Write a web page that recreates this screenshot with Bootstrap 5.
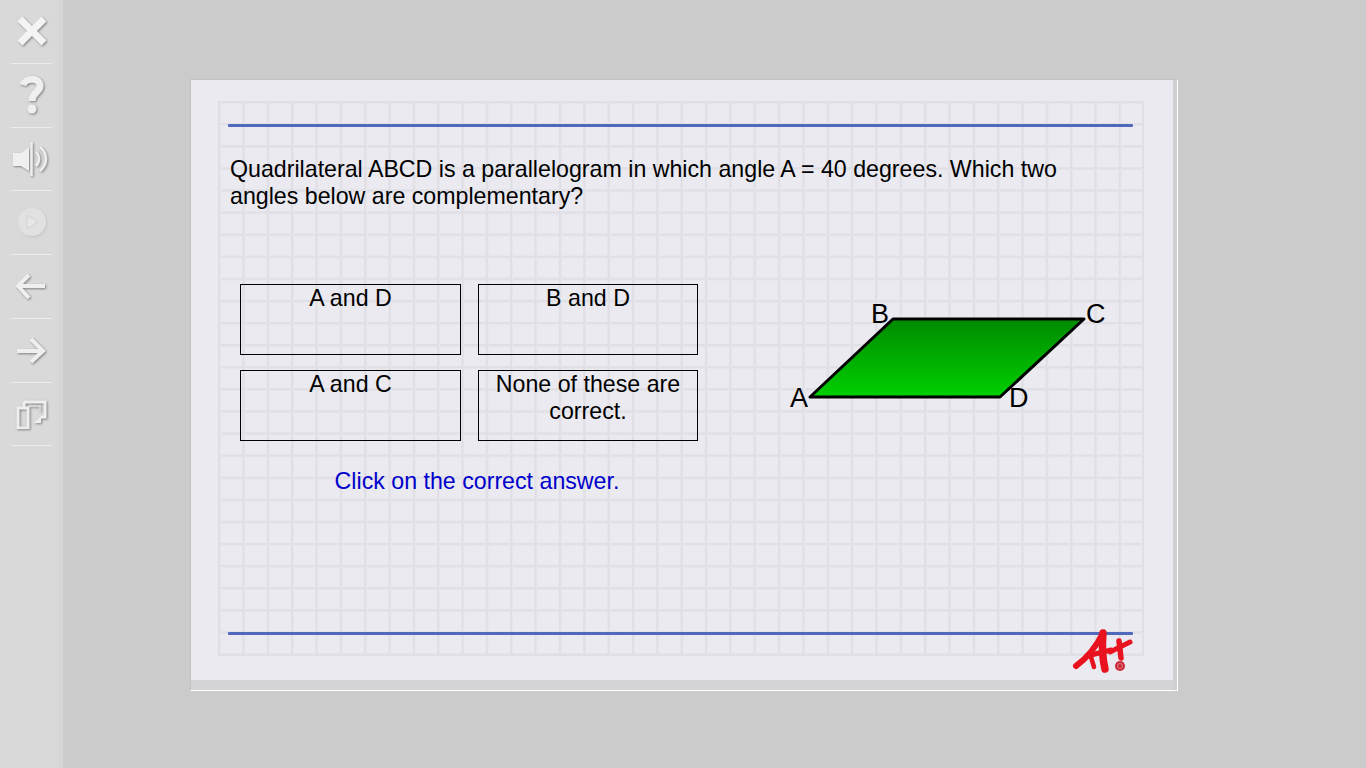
<!DOCTYPE html>
<html lang="en">
<head>
    <meta charset="UTF-8">
    <meta name="viewport" content="width=device-width, initial-scale=1.0">
    <title>Quadrilateral question</title>
    <link rel="stylesheet" href="https://cdn.jsdelivr.net/npm/bootstrap@5.3.0/dist/css/bootstrap.min.css">
    <style>
        html, body { height: 100%; }
        body {
            background: #cbcbcb;
            font-family: "Liberation Sans", Arial, sans-serif;
            color: #000;
            overflow: hidden;
        }
        .tool-bar {
            width: 63px;
            height: 768px;
            background: #d9d9d9;
            border-right: 5px solid #d5d5d5;
            padding: 0.2px 6px 0 11px;
            flex: none;
        }
        .tool-slot {
            height: 63.72px;
            border-bottom: 1px solid #ececec;
            flex: none;
        }
        .tool-slot svg { filter: drop-shadow(1px 1px 1px #808080); }
        .tool-slot svg.tool-off { filter: drop-shadow(1px 1px 1px #c4c4c4); }
        .quiz-panel {
            width: 988px;
            height: 612px;
            margin: 79px 0 0 127px;
            background: #eaeaf0;
            border-top: 1px solid #c2c2c2;
            border-left: 1px solid #c2c2c2;
            border-right: 1px solid #fff;
            border-bottom: 1px solid #fff;
        }
        .panel-strip-r { width: 4px; background: #cfcfd2; flex: none; }
        .panel-strip-b { height: 10px; background: #d4d4d6; flex: none; }
        .quiz-sheet {
            width: 926px;
            height: 555px;
            margin: 21px 0 0 27px;
            padding: 23px 9px 19px 10px;
            position: relative;
            border-right: 2px solid #dfdfe5;
            border-bottom: 2px solid #dfdfe5;
            background-image:
                linear-gradient(to right, #dfdfe5 2px, #e5e5ea 2px, #e5e5ea 3px, transparent 3px),
                linear-gradient(to bottom, #dfdfe5 2px, #e5e5ea 2px, #e5e5ea 3px, transparent 3px);
            background-size: 24.35px 22.1px;
        }
        .blue-rule { height: 3px; background: #5169ba; border-radius: 1px; flex: none; }
        .question-text {
            font-size: 23.2px;
            line-height: 27px;
            margin: 29px 70px 0 2px;
        }
        .answer-grid {
            display: grid;
            grid-template-columns: 221px 220px;
            grid-auto-rows: 71px;
            column-gap: 17px;
            row-gap: 15px;
        }
        .answer-box {
            border: 1px solid #000;
            font-size: 23.2px;
            line-height: 27px;
            text-align: center;
            padding: 0 10px;
        }
        .click-hint {
            font-size: 23.2px;
            line-height: 27px;
            color: #0000cc;
            text-align: center;
            width: 474px;
            margin-top: 27px;
        }
        .answer-area { margin: 74px 0 0 12px; }
        .figure-wrap { margin: 85px 0 0 58px; }
        .figure-wrap text { font-family: "Liberation Sans", Arial, sans-serif; font-size: 27px; fill: #000; }
        .brand-mark { position: absolute; right: 2px; bottom: -26px; }
    </style>
</head>
<body class="d-flex">
    <div class="tool-bar d-flex flex-column">
        <div class="tool-slot d-flex align-items-center justify-content-center">
            <svg width="34" height="34" viewBox="0 1 34 34"><path d="M5 5 L29 29 M29 5 L5 29" stroke="#f4f4f4" stroke-width="7"/></svg>
        </div>
        <div class="tool-slot d-flex align-items-center justify-content-center">
            <svg width="26" height="40" viewBox="0 0 26 40"><path d="M4 10 C6 3 20 2 21 10 C22 17 13 17 13 26" fill="none" stroke="#efefef" stroke-width="7"/><circle cx="13" cy="34" r="4.5" fill="#efefef"/></svg>
        </div>
        <div class="tool-slot d-flex align-items-center justify-content-center">
            <svg width="38" height="36" viewBox="0 0 38 36"><path d="M0 12 H8 L16 6 V30 L8 25 H0 Z" fill="#efefef"/><path d="M18.5 1 V35" stroke="#efefef" stroke-width="2.5"/><path d="M23 11 C27 15 27 21 23 25 M27 6 C35 13 35 23 27 30" fill="none" stroke="#efefef" stroke-width="2.5"/></svg>
        </div>
        <div class="tool-slot d-flex align-items-center justify-content-center">
            <svg class="tool-off" width="30" height="30" viewBox="0 1 30 30"><circle cx="15" cy="15" r="14" fill="#e1e1e1"/><path d="M10 8 L21 15 L10 22 Z" fill="#e6e6e6" stroke="#d2d2d2"/></svg>
        </div>
        <div class="tool-slot d-flex align-items-center justify-content-center">
            <svg width="32" height="28" viewBox="1 -1 32 28"><path d="M14 2 L3 13 L14 25 M3 13 H30" fill="none" stroke="#efefef" stroke-width="4"/></svg>
        </div>
        <div class="tool-slot d-flex align-items-center justify-content-center">
            <svg width="32" height="28" viewBox="1 -1 32 28"><path d="M16 2 L28 14 L16 25 M28 14 H2" fill="none" stroke="#efefef" stroke-width="4"/></svg>
        </div>
        <div class="tool-slot d-flex align-items-center justify-content-center">
            <svg width="32" height="30" viewBox="0 0 32 30"><path d="M8 3 H29 V18 H25 M8 3 V8" fill="none" stroke="#efefef" stroke-width="3"/><path d="M13 7 H24 V12" fill="none" stroke="#e2e2e2" stroke-width="1.5"/><rect x="2" y="9" width="10" height="20" fill="none" stroke="#efefef" stroke-width="3"/><path d="M18 24 L25 17 V24 Z" fill="#efefef"/></svg>
        </div>
    </div>

    <div class="quiz-panel d-flex">
        <div class="d-flex flex-column flex-grow-1">
            <div class="flex-grow-1">
                <div class="quiz-sheet d-flex flex-column">
                    <div class="blue-rule"></div>
                    <p class="question-text">Quadrilateral ABCD is a parallelogram in which angle A = 40 degrees. Which two angles below are complementary?</p>
                    <div class="d-flex">
                        <div class="answer-area">
                            <div class="answer-grid">
                                <div class="answer-box">A and D</div>
                                <div class="answer-box">B and D</div>
                                <div class="answer-box">A and C</div>
                                <div class="answer-box">None of these are correct.</div>
                            </div>
                            <div class="click-hint">Click on the correct answer.</div>
                        </div>
                        <div class="figure-wrap">
                            <svg width="350" height="140" viewBox="0 0 350 140">
                                <defs>
                                    <linearGradient id="paraFill" x1="0" y1="0" x2="0" y2="1">
                                        <stop offset="0" stop-color="#008a00"/>
                                        <stop offset="1" stop-color="#00d000"/>
                                    </linearGradient>
                                </defs>
                                <path d="M38 102 L121 24 L312 24 L228 102 Z" fill="url(#paraFill)" stroke="#000" stroke-width="3" stroke-linejoin="round"/>
                                <text x="18" y="112">A</text>
                                <text x="99" y="28">B</text>
                                <text x="314" y="28">C</text>
                                <text x="237" y="112">D</text>
                            </svg>
                        </div>
                    </div>
                    <div class="blue-rule mt-auto"></div>
                    <svg class="brand-mark" width="75" height="55" viewBox="0 0 75 55">
                        <g fill="none" stroke="#e8131f" stroke-linecap="round" stroke-linejoin="round">
                            <path d="M11 41 C22 33 32 20 38 8" stroke-width="6"/>
                            <path d="M38 8 C37 20 37 32 40 44" stroke-width="7.5"/>
                            <path d="M26 32 L29 42" stroke-width="4.5"/>
                            <path d="M22 31 L46 25" stroke-width="5"/>
                            <path d="M54 16 L56 33" stroke-width="5.5"/>
                            <path d="M45 27 L65 17" stroke-width="5"/>
                        </g>
                        <circle cx="55" cy="41" r="5" fill="#c9283a"/>
                        <circle cx="55" cy="41" r="2.5" fill="none" stroke="#e99" stroke-width="0.8"/>
                    </svg>
                </div>
            </div>
            <div class="panel-strip-b"></div>
        </div>
        <div class="panel-strip-r"></div>
    </div>

    <script src="https://cdn.jsdelivr.net/npm/bootstrap@5.3.0/dist/js/bootstrap.bundle.min.js"></script>
</body>
</html>
